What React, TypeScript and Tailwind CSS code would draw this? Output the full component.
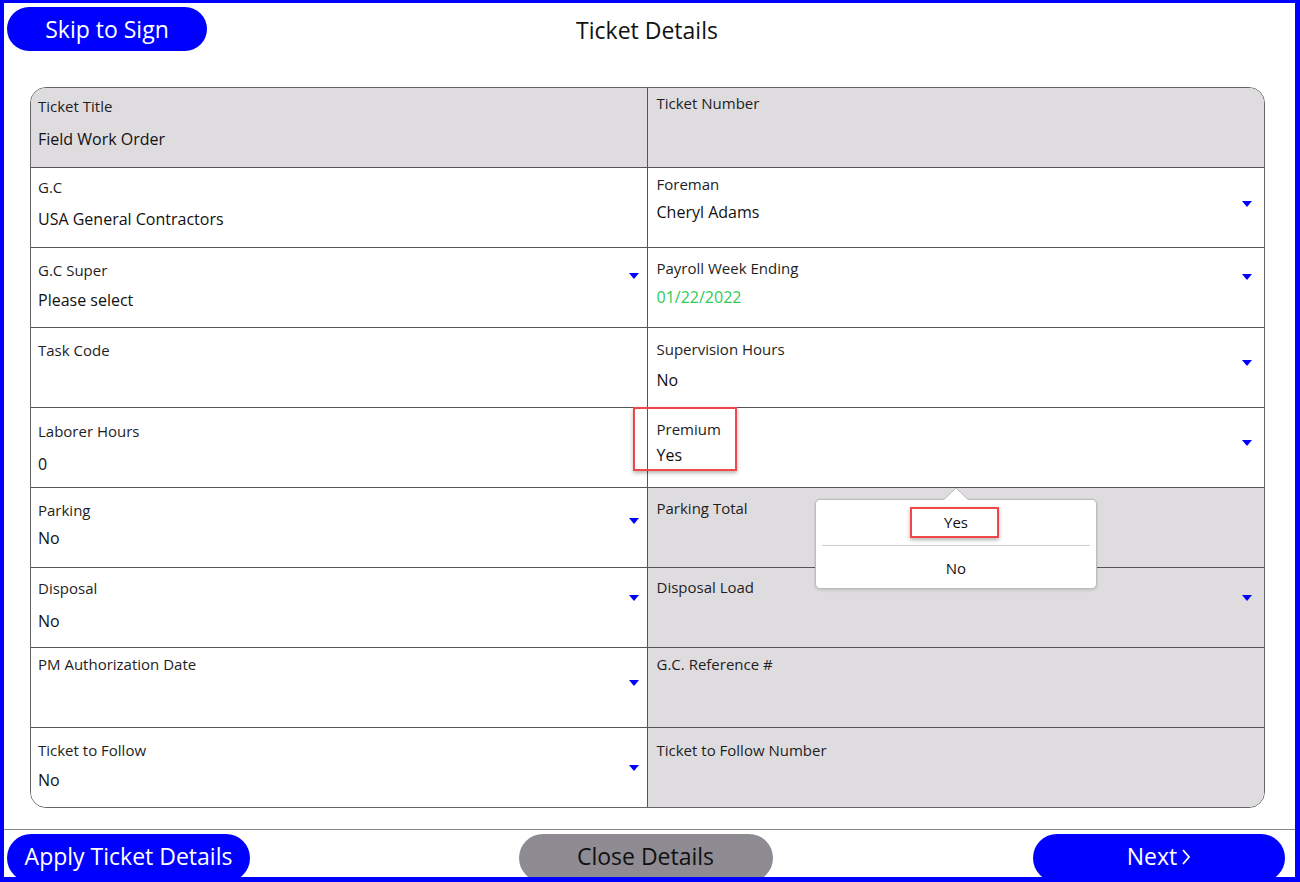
import React from 'react'

type Cell = {
  label: string
  value?: string
  gray?: boolean
  green?: boolean
  pt: string
  gap?: string
  arrow?: string
}

const ROWS: [Cell, Cell][] = [
  [
    { label: 'Ticket Title', value: 'Field Work Order', gray: true, pt: 'pt-[8px]', gap: 'mt-[13px]' },
    { label: 'Ticket Number', gray: true, pt: 'pt-[5px]' },
  ],
  [
    { label: 'G.C', value: 'USA General Contractors', pt: 'pt-[9px]', gap: 'mt-[12px]' },
    { label: 'Foreman', value: 'Cheryl Adams', pt: 'pt-[6px]', gap: 'mt-[8px]', arrow: 'top-[33px]' },
  ],
  [
    { label: 'G.C Super', value: 'Please select', pt: 'pt-[12px]', gap: 'mt-[10px]', arrow: 'top-[25px]' },
    { label: 'Payroll Week Ending', value: '01/22/2022', green: true, pt: 'pt-[10px]', gap: 'mt-[9px]', arrow: 'top-[26px]' },
  ],
  [
    { label: 'Task Code', pt: 'pt-[12px]' },
    { label: 'Supervision Hours', value: 'No', pt: 'pt-[11px]', gap: 'mt-[11px]', arrow: 'top-[32px]' },
  ],
  [
    { label: 'Laborer Hours', value: '0', pt: 'pt-[13px]', gap: 'mt-[13px]' },
    { label: 'Premium', value: 'Yes', pt: 'pt-[11px]', gap: 'mt-[6px]', arrow: 'top-[32px]' },
  ],
  [
    { label: 'Parking', value: 'No', pt: 'pt-[12px]', gap: 'mt-[8px]', arrow: 'top-[30px]' },
    { label: 'Parking Total', gray: true, pt: 'pt-[10px]' },
  ],
  [
    { label: 'Disposal', value: 'No', pt: 'pt-[10px]', gap: 'mt-[13px]', arrow: 'top-[27px]' },
    { label: 'Disposal Load', gray: true, pt: 'pt-[9px]', arrow: 'top-[27px]' },
  ],
  [
    { label: 'PM Authorization Date', pt: 'pt-[6px]', arrow: 'top-[32px]' },
    { label: 'G.C. Reference #', gray: true, pt: 'pt-[6px]' },
  ],
  [
    { label: 'Ticket to Follow', value: 'No', pt: 'pt-[12px]', gap: 'mt-[10px]', arrow: 'top-[37px]' },
    { label: 'Ticket to Follow Number', gray: true, pt: 'pt-[12px]' },
  ],
]

const Caret = ({ className }: { className: string }) => (
  <svg width="10" height="6" viewBox="0 0 10 6" className={className}>
    <polygon points="0,0 10,0 5,6" fill="#0000ff" />
  </svg>
)

const FieldCell = ({ cell, side, last }: { cell: Cell; side: 'l' | 'r'; last: boolean }) => (
  <div
    className={`relative h-[80px] ${cell.pt} ${cell.gray ? 'bg-[#dfdce0]' : 'bg-white'} ${
      side === 'l' ? 'pl-[7px] border-r border-[#555]' : 'pl-[9px]'
    } ${last ? '' : 'border-b border-[#555]'}`}
  >
    <div className="text-[15px] leading-[20px] text-[#1e1e1e]">{cell.label}</div>
    {cell.value && (
      <div className={`${cell.gap} text-[16px] leading-[21px] ${cell.green ? 'text-[#2ecc55]' : 'text-[#111]'}`}>
        {cell.value}
      </div>
    )}
    {cell.arrow && (
      <Caret className={`absolute ${cell.arrow} ${side === 'l' ? 'right-[8px]' : 'right-[12px]'}`} />
    )}
  </div>
)

export default function App() {
  return (
    <div
      className="relative w-[1300px] h-[882px] overflow-hidden bg-white border-l-4 border-t-[3px] border-r-[5px] border-b-[5px] border-[#0000ff]"
      style={{ fontFamily: '"Open Sans", "Noto Sans", sans-serif' }}
    >
      {/* Header */}
      <div className="h-[84px] grid grid-cols-[1fr_auto_1fr] items-start pt-[4px] pl-[3px] pr-[8px]">
        <button className="w-[200px] h-[44px] rounded-full bg-[#0000ff] text-white text-[23px] font-medium leading-none">
          Skip to Sign
        </button>
        <div className="pt-[9px] text-[23px] leading-[28px] text-[#111] font-medium">Ticket Details</div>
        <div />
      </div>

      {/* Table */}
      <div className="ml-[26px] w-[1235px] h-[721px] grid grid-cols-2 border border-[#666] rounded-[16px] overflow-hidden">
        {ROWS.map((row, i) => (
          <React.Fragment key={i}>
            <FieldCell cell={row[0]} side="l" last={i === ROWS.length - 1} />
            <FieldCell cell={row[1]} side="r" last={i === ROWS.length - 1} />
          </React.Fragment>
        ))}
      </div>

      {/* Footer */}
      <div className="mt-[21px] border-t border-[#888]" />
      <div className="flex items-start justify-between pt-[4px] pl-[3px] pr-[10px]">
        <button className="w-[243px] h-[48px] rounded-full bg-[#0000ff] text-white text-[23px] font-medium leading-none pb-[3px]">
          Apply Ticket Details
        </button>
        <button className="ml-[8px] w-[254px] h-[48px] rounded-full bg-[#8e8c92] text-[#111] text-[23px] font-medium leading-none pb-[3px]">
          Close Details
        </button>
        <button className="w-[252px] h-[48px] rounded-full bg-[#0000ff] text-white text-[23px] font-medium leading-none pb-[3px] flex items-center justify-center gap-[4px]">
          <span>Next</span>
          <svg width="10" height="18" viewBox="0 0 10 18">
            <polyline points="2,2 8,9 2,16" fill="none" stroke="white" strokeWidth="1.8" />
          </svg>
        </button>
      </div>

      {/* Highlight around Premium */}
      <div className="absolute left-[629px] top-[404px] w-[104px] h-[64px] border-2 border-[#f04848] shadow-[0_2px_4px_rgba(0,0,0,0.3)]" />

      {/* Popover */}
      <div className="absolute left-[811px] top-[496px] w-[282px] h-[90px] bg-white border border-[#bbb] rounded-[5px] shadow-[0_1px_3px_rgba(0,0,0,0.15)]">
        <svg width="26" height="14" viewBox="0 0 26 14" className="absolute left-[127px] top-[-13px]">
          <polygon points="0,13.5 13,1 26,13.5" fill="white" stroke="#bbb" strokeWidth="1" />
          <rect x="0" y="13" width="26" height="2" fill="white" />
        </svg>
        <div className="h-[45px] flex items-center justify-center text-[15px] text-[#111] font-medium">Yes</div>
        <div className="mx-[6px] border-t border-[#ccc]" />
        <div className="h-[44px] flex items-center justify-center text-[15px] text-[#111] font-medium">No</div>
        <div className="absolute left-[94px] top-[7px] w-[89px] h-[31px] border-2 border-[#f04848] shadow-[0_2px_4px_rgba(0,0,0,0.3)]" />
      </div>
    </div>
  )
}
